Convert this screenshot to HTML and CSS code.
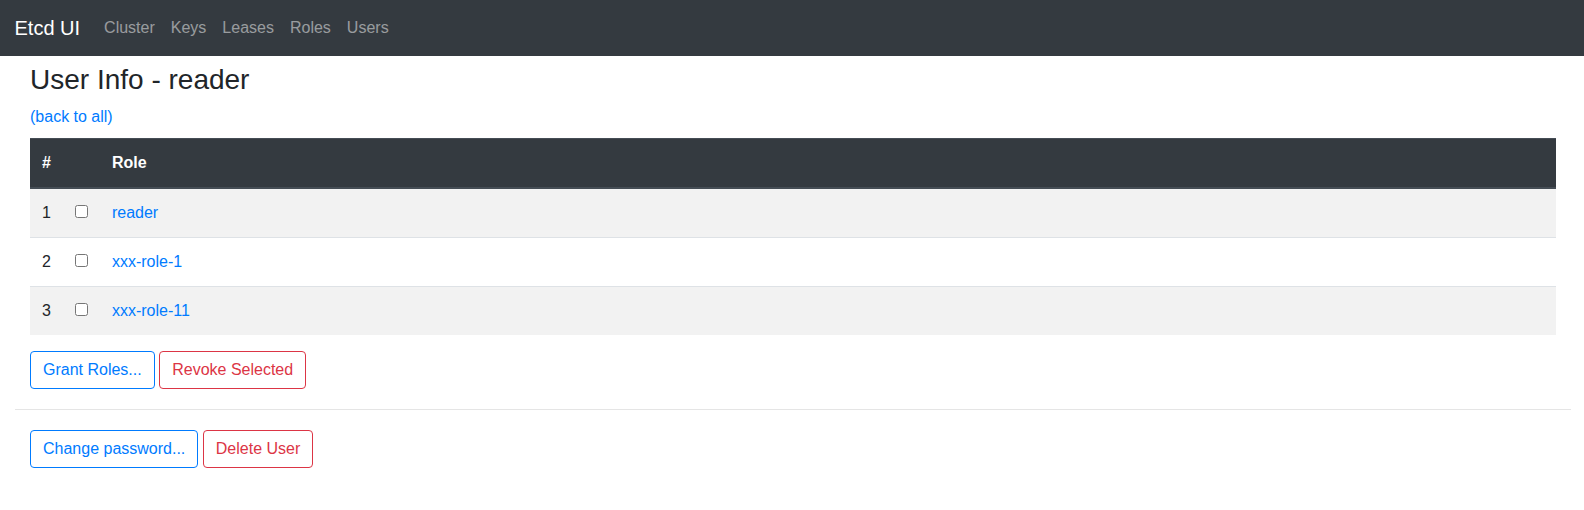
FILE: index.html
```html
<!DOCTYPE html>
<html lang="en">
<head>
<meta charset="utf-8">
<title>Etcd UI - User Info</title>
<link rel="stylesheet" href="styles.css">
</head>
<body>
<nav class="navbar">
  <a class="brand" href="#">Etcd UI</a>
  <ul class="nav">
    <li><a class="nav-link" href="#">Cluster</a></li>
    <li><a class="nav-link" href="#">Keys</a></li>
    <li><a class="nav-link" href="#">Leases</a></li>
    <li><a class="nav-link" href="#">Roles</a></li>
    <li><a class="nav-link" href="#">Users</a></li>
  </ul>
</nav>
<main class="page">
  <section class="block">
    <h3 class="title">User Info - reader</h3>
    <div class="back"><a href="#">(back to all)</a></div>
    <table class="table">
      <thead>
        <tr>
          <th class="col-num">#</th>
          <th class="col-check"></th>
          <th>Role</th>
        </tr>
      </thead>
      <tbody>
        <tr>
          <td class="col-num">1</td>
          <td class="col-check"><input type="checkbox" class="check"></td>
          <td><a href="#">reader</a></td>
        </tr>
        <tr>
          <td class="col-num">2</td>
          <td class="col-check"><input type="checkbox" class="check"></td>
          <td><a href="#">xxx-role-1</a></td>
        </tr>
        <tr>
          <td class="col-num">3</td>
          <td class="col-check"><input type="checkbox" class="check"></td>
          <td><a href="#">xxx-role-11</a></td>
        </tr>
      </tbody>
    </table>
    <div class="btn-row">
      <button class="btn btn-primary">Grant Roles...</button>
      <button class="btn btn-danger">Revoke Selected</button>
    </div>
  </section>
  <hr class="divider">
  <section class="block">
    <div class="btn-row">
      <button class="btn btn-primary">Change password...</button>
      <button class="btn btn-danger">Delete User</button>
    </div>
  </section>
</main>
</body>
</html>
```
FILE: styles.css
```css
* { box-sizing: border-box; }
html, body { margin: 0; padding: 0; }
body {
  font-family: "Liberation Sans", Arial, sans-serif;
  font-size: 16px;
  line-height: 1.5;
  color: #212529;
  background: #fff;
}
a { color: #007bff; text-decoration: none; }

.navbar {
  display: flex;
  align-items: center;
  height: 56px;
  padding: 0 16px 0 14.5px;
  background: #343a40;
}
.brand {
  color: #fff;
  font-size: 20px;
  line-height: 30px;
  margin-right: 16px;
}
.nav {
  display: flex;
  list-style: none;
  margin: 0;
  padding: 0;
}
.nav-link {
  display: block;
  padding: 8px;
  color: rgba(255, 255, 255, 0.5);
}

.page { padding: 0 13px 0 15px; }
.block { padding: 0 15px; }

.title {
  margin: 7px 0 8px;
  font-size: 28px;
  font-weight: 500;
  line-height: 34px;
}
.back { margin-bottom: 9px; }

.table {
  width: 100%;
  border-collapse: collapse;
  margin-bottom: 16px;
}
.table th, .table td {
  padding: 12px;
  text-align: left;
  vertical-align: top;
}
.table th {
  background: #343a40;
  color: #fff;
  font-weight: bold;
  border-top: 1px solid #454d55;
  border-bottom: 2px solid #454d55;
}
.table td { border-top: 1px solid #dee2e6; }
.table tbody tr:nth-child(odd) { background: #f2f2f2; }
.col-num { width: 9px; }
.col-check { width: 13px; }
.check {
  margin: 0;
  width: 13px;
  height: 13px;
  vertical-align: baseline;
}

.btn-row {
  display: flex;
  gap: 4.5px;
}
.btn {
  font-family: inherit;
  font-size: 16px;
  line-height: 24px;
  padding: 6px 12px;
  border: 1px solid;
  border-radius: 4px;
  background: transparent;
  cursor: pointer;
}
.btn-primary { color: #007bff; border-color: #007bff; }
.btn-danger { color: #dc3545; border-color: #dc3545; }

.divider {
  margin: 20px 0;
  border: 0;
  border-top: 1px solid rgba(0, 0, 0, 0.1);
}
```
